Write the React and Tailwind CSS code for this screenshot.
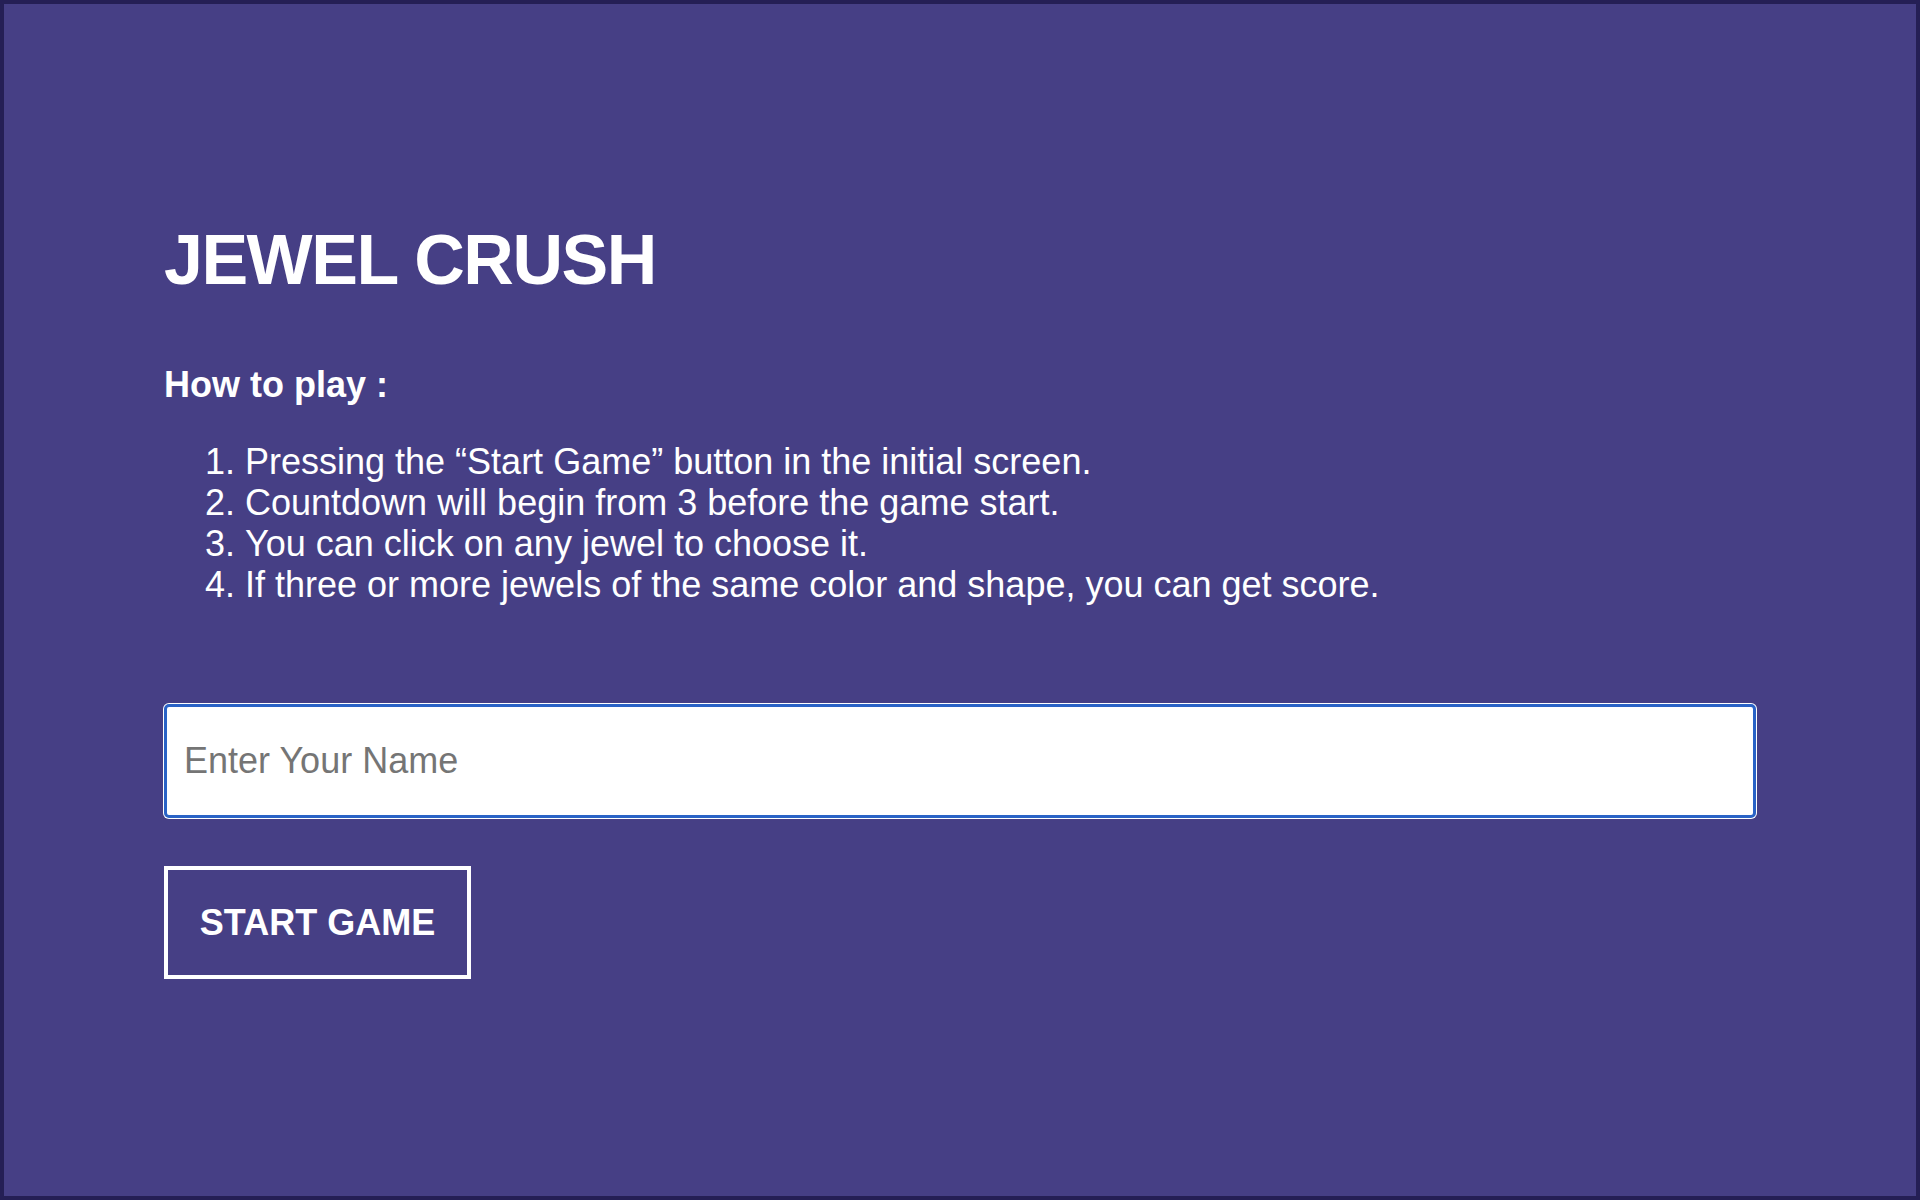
const STEPS = [
  'Pressing the “Start Game” button in the initial screen.',
  'Countdown will begin from 3 before the game start.',
  'You can click on any jewel to choose it.',
  'If three or more jewels of the same color and shape, you can get score.',
]

const App = () => {
  return (
    <div className="h-screen w-full border-4 border-[#251f55] bg-[#463f85] text-white font-['Liberation_Sans',Arial,sans-serif]">
      <div className="px-[160px] pt-[216px]">

        {/* Title */}
        <h1 className="text-[70px] leading-[80px] font-bold tracking-[-1.5px]">
          JEWEL CRUSH
        </h1>

        {/* Instructions */}
        <p className="mt-[65px] text-[36px] leading-[40px] font-bold">How to play :</p>
        <ol className="mt-[36px] list-decimal list-outside pl-[81px] text-[36px] leading-[41px]">
          {STEPS.map(s => (
            <li key={s}>{s}</li>
          ))}
        </ol>

        {/* Name input */}
        <input
          type="text"
          placeholder="Enter Your Name"
          className="mt-[99px] block w-full h-[114px] bg-white rounded-[5px] border-[3px] border-[#2a63c6]
                     ring-1 ring-white px-[17px] text-[36px] text-black placeholder:text-[#757575] outline-none"
        />

        {/* Start button */}
        <button
          className="mt-[48px] w-[307px] h-[113px] border-4 border-white bg-transparent text-white
                     text-[36px] font-bold flex items-center justify-center"
        >
          START GAME
        </button>
      </div>
    </div>
  )
}

export default App
